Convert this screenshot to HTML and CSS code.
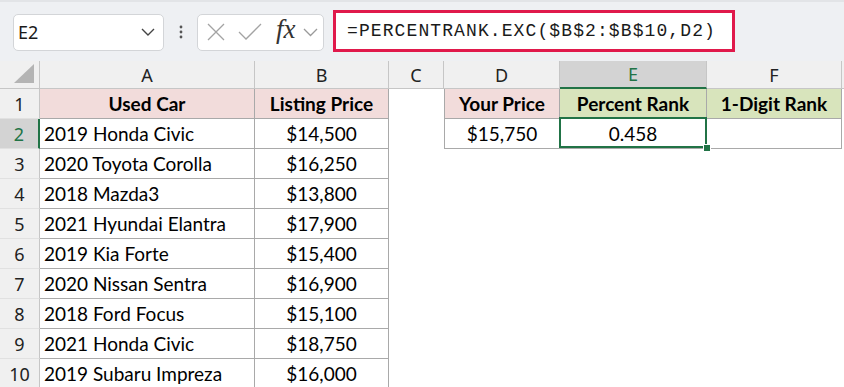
FILE: index.html
```html
<!DOCTYPE html>
<html lang="en">
<head>
  <meta charset="UTF-8">
  <meta name="viewport" content="width=device-width, initial-scale=1.0">
  <title>PERCENTRANK.EXC - Used Cars</title>
  <link rel="stylesheet" href="styles.css">
</head>
<body>
  <div class="formula-bar">
    <div class="name-box">
      <span>E2</span>
      <svg class="chev" width="14" height="8" viewBox="0 0 14 8"><path d="M1 1l6 6 6-6" fill="none" stroke="#444" stroke-width="1.4"/></svg>
    </div>
    <svg class="grip" width="4" height="14" viewBox="0 0 4 14">
      <circle cx="2" cy="2" r="1.4" fill="#555"/>
      <circle cx="2" cy="7" r="1.4" fill="#555"/>
      <circle cx="2" cy="12" r="1.4" fill="#555"/>
    </svg>
    <div class="fx-box">
      <svg class="ico-x" width="18" height="18" viewBox="0 0 18 18"><path d="M1 1l16 16M17 1L1 17" fill="none" stroke="#a3a3a3" stroke-width="1.3"/></svg>
      <svg class="ico-ok" width="24" height="18" viewBox="0 0 24 18"><path d="M1 9l7 7L23 1" fill="none" stroke="#a3a3a3" stroke-width="1.3"/></svg>
      <span class="fx">fx</span>
      <svg class="ico-chev" width="15" height="9" viewBox="0 0 15 9"><path d="M1 1l6.5 6.5L14 1" fill="none" stroke="#9a9a9a" stroke-width="1.3"/></svg>
    </div>
    <div class="formula">=PERCENTRANK.EXC($B$2:$B$10,D2)</div>
  </div>

  <div class="sheet">
    <!-- column headers -->
    <div class="corner"><svg width="20" height="19" viewBox="0 0 20 19"><path d="M20 0V19H0Z" fill="#b4b4b4"/></svg></div>
    <div class="ch">A</div>
    <div class="ch">B</div>
    <div class="ch">C</div>
    <div class="ch">D</div>
    <div class="ch ch-sel">E</div>
    <div class="ch">F</div>
    <div class="ch ch-end"></div>

    <!-- row 1 -->
    <div class="rh">1</div>
    <div class="cell bd pink head">Used Car</div>
    <div class="cell bd pink head">Listing Price</div>
    <div class="cell"></div>
    <div class="cell bd bl pink head">Your Price</div>
    <div class="cell bd green head">Percent Rank</div>
    <div class="cell bd green head">1-Digit Rank</div>

    <!-- row 2 -->
    <div class="rh rh-sel">2</div>
    <div class="cell bd left">2019 Honda Civic</div>
    <div class="cell bd">$14,500</div>
    <div class="cell"></div>
    <div class="cell bd bl">$15,750</div>
    <div class="cell bd active">0.458</div>
    <div class="cell bd"></div>

    <div class="rh">3</div>
    <div class="cell bd left">2020 Toyota Corolla</div>
    <div class="cell bd">$16,250</div>

    <div class="rh">4</div>
    <div class="cell bd left">2018 Mazda3</div>
    <div class="cell bd">$13,800</div>

    <div class="rh">5</div>
    <div class="cell bd left">2021 Hyundai Elantra</div>
    <div class="cell bd">$17,900</div>

    <div class="rh">6</div>
    <div class="cell bd left">2019 Kia Forte</div>
    <div class="cell bd">$15,400</div>

    <div class="rh">7</div>
    <div class="cell bd left">2020 Nissan Sentra</div>
    <div class="cell bd">$16,900</div>

    <div class="rh">8</div>
    <div class="cell bd left">2018 Ford Focus</div>
    <div class="cell bd">$15,100</div>

    <div class="rh">9</div>
    <div class="cell bd left">2021 Honda Civic</div>
    <div class="cell bd">$18,750</div>

    <div class="rh">10</div>
    <div class="cell bd left">2019 Subaru Impreza</div>
    <div class="cell bd">$16,000</div>
  </div>
</body>
</html>
```

FILE: styles.css
```css
body {
  margin: 0;
  background: #fff;
  font-family: 'Noto Sans', 'Open Sans', sans-serif;
  color: #000;
  overflow: hidden;
}

/* formula bar */
.formula-bar {
  height: 61px;
  box-sizing: border-box;
  background: #eef0f3;
  border-top: 2px solid #e2e4e7;
  display: flex;
  align-items: center;
  padding: 0 0 0 13px;
}
.name-box {
  width: 151px;
  height: 37px;
  box-sizing: border-box;
  background: #fff;
  border: 1px solid #d3d5d8;
  border-radius: 5px;
  display: flex;
  align-items: center;
  justify-content: space-between;
  padding: 0 8px 0 4px;
  font-size: 18px;
  color: #1a1a1a;
  margin-top: 1px;
}
.grip {
  margin: 0 14px 0 15px;
}
.fx-box {
  width: 127px;
  height: 37px;
  box-sizing: border-box;
  background: #fff;
  border: 1px solid #d3d5d8;
  border-radius: 5px;
  display: flex;
  align-items: center;
  padding: 0 2px 0 9px;
  margin-top: 1px;
}
.ico-ok {
  margin-left: 13px;
}
.fx {
  font-family: 'Liberation Serif', serif;
  font-style: italic;
  font-size: 27px;
  color: #333;
  line-height: 1;
  margin: -5px 0 0 14px;
}
.ico-chev {
  margin-left: 7px;
}
.formula {
  width: 402px;
  height: 42px;
  box-sizing: border-box;
  margin-left: 9px;
  margin-top: -1px;
  border: 3px solid #e0194b;
  background: #fff;
  display: flex;
  align-items: center;
  padding-left: 11px;
  font-family: 'Liberation Mono', monospace;
  font-size: 18px;
  letter-spacing: 1.1px;
  color: #1a1a1a;
}

/* sheet grid */
.sheet {
  display: grid;
  grid-template-columns: 40px 215px 134px 55px 116px 147px 135px 1fr;
  grid-template-rows: 28px repeat(10, 30px);
}
.corner, .ch, .rh {
  background: #f0f0f0;
  box-sizing: border-box;
  display: flex;
  align-items: center;
  justify-content: center;
  font-size: 18px;
  color: #222;
}
.corner {
  border-right: 1px solid #c6c6c6;
  border-bottom: 1px solid #c6c6c6;
  justify-content: flex-end;
  align-items: flex-end;
  padding: 0 5px 5px 0;
}
.ch {
  border-right: 1px solid #c6c6c6;
  border-bottom: 1px solid #c6c6c6;
}
.ch-end {
  border-right: none;
}
.ch-sel {
  background: #d3d3d3;
  color: #217346;
  border-bottom: 2px solid #217346;
}
.rh {
  grid-column: 1;
  border-right: 1px solid #c6c6c6;
  border-bottom: 1px solid #e1e1e1;
}
.rh-sel {
  background: #d3d3d3;
  color: #217346;
  border-right: 2px solid #217346;
}

.cell {
  box-sizing: border-box;
  display: flex;
  align-items: center;
  justify-content: center;
  font-family: 'Lato', sans-serif;
  font-size: 19px;
  white-space: nowrap;
  overflow: hidden;
}
.bd {
  border-right: 1px solid #a9a9a9;
  border-bottom: 1px solid #a9a9a9;
}
.bl {
  border-left: 1px solid #a9a9a9;
}
.left {
  justify-content: flex-start;
  padding-left: 4px;
}
.head {
  font-weight: bold;
}
.pink {
  background: #f2dcdb;
}
.green {
  background: #d8e4bc;
}

/* active cell outline and fill handle */
.active {
  position: relative;
  overflow: visible;
}
.active::after {
  content: '';
  position: absolute;
  top: -2px;
  left: -1px;
  right: -1px;
  bottom: 0;
  border: 2px solid #217346;
}
.active::before {
  content: '';
  position: absolute;
  right: -5px;
  bottom: -4px;
  width: 6px;
  height: 6px;
  background: #217346;
  border: 1px solid #fff;
  z-index: 1;
}
```
